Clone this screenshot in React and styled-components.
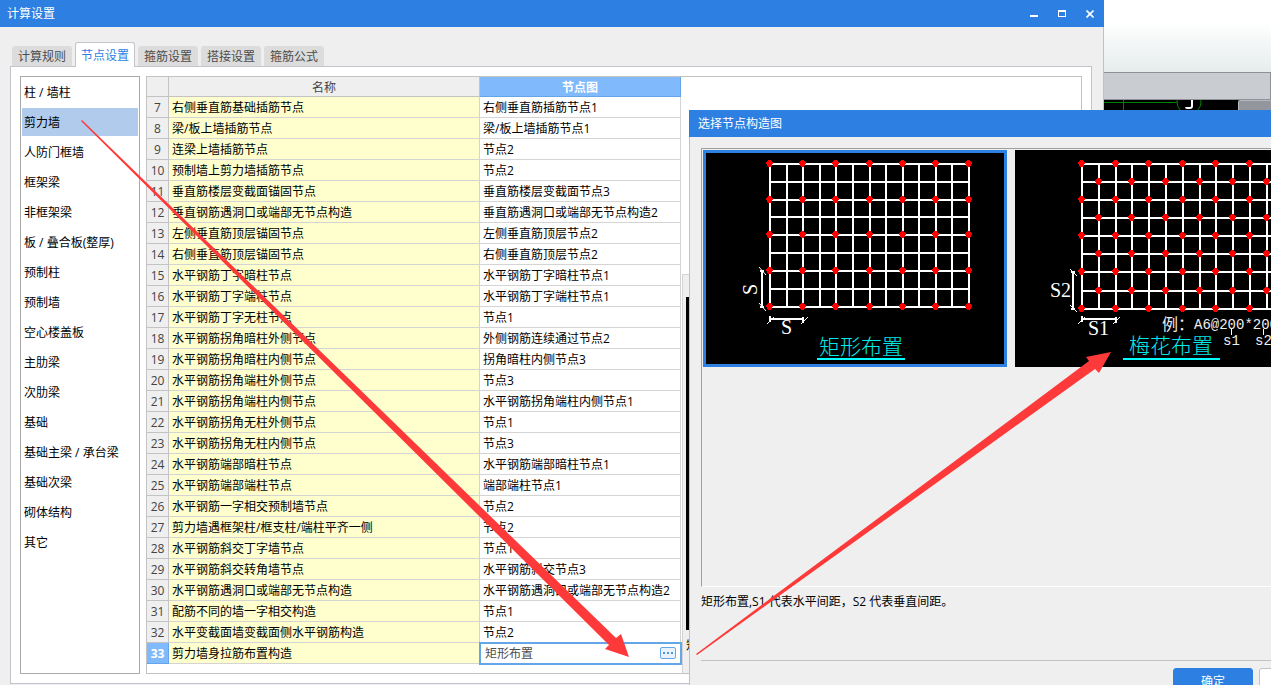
import React, { useState } from "react";
import styled, { createGlobalStyle } from "styled-components";

const tabs = ["计算规则", "节点设置", "箍筋设置", "搭接设置", "箍筋公式"];

const categories = [
  "柱 / 墙柱",
  "剪力墙",
  "人防门框墙",
  "框架梁",
  "非框架梁",
  "板 / 叠合板(整厚)",
  "预制柱",
  "预制墙",
  "空心楼盖板",
  "主肋梁",
  "次肋梁",
  "基础",
  "基础主梁 / 承台梁",
  "基础次梁",
  "砌体结构",
  "其它",
];

// first visible row is number 7
const rows = [
  ["右侧垂直筋基础插筋节点", "右侧垂直筋插筋节点1"],
  ["梁/板上墙插筋节点", "梁/板上墙插筋节点1"],
  ["连梁上墙插筋节点", "节点2"],
  ["预制墙上剪力墙插筋节点", "节点2"],
  ["垂直筋楼层变截面锚固节点", "垂直筋楼层变截面节点3"],
  ["垂直钢筋遇洞口或端部无节点构造", "垂直筋遇洞口或端部无节点构造2"],
  ["左侧垂直筋顶层锚固节点", "左侧垂直筋顶层节点2"],
  ["右侧垂直筋顶层锚固节点", "右侧垂直筋顶层节点2"],
  ["水平钢筋丁字暗柱节点", "水平钢筋丁字暗柱节点1"],
  ["水平钢筋丁字端柱节点", "水平钢筋丁字端柱节点1"],
  ["水平钢筋丁字无柱节点", "节点1"],
  ["水平钢筋拐角暗柱外侧节点", "外侧钢筋连续通过节点2"],
  ["水平钢筋拐角暗柱内侧节点", "拐角暗柱内侧节点3"],
  ["水平钢筋拐角端柱外侧节点", "节点3"],
  ["水平钢筋拐角端柱内侧节点", "水平钢筋拐角端柱内侧节点1"],
  ["水平钢筋拐角无柱外侧节点", "节点1"],
  ["水平钢筋拐角无柱内侧节点", "节点3"],
  ["水平钢筋端部暗柱节点", "水平钢筋端部暗柱节点1"],
  ["水平钢筋端部端柱节点", "端部端柱节点1"],
  ["水平钢筋一字相交预制墙节点", "节点2"],
  ["剪力墙遇框架柱/框支柱/端柱平齐一侧", "节点2"],
  ["水平钢筋斜交丁字墙节点", "节点1"],
  ["水平钢筋斜交转角墙节点", "水平钢筋斜交节点3"],
  ["水平钢筋遇洞口或端部无节点构造", "水平钢筋遇洞口或端部无节点构造2"],
  ["配筋不同的墙一字相交构造", "节点1"],
  ["水平变截面墙变截面侧水平钢筋构造", "节点2"],
];

const rectGrid = {
  xs: [64, 81, 97, 114, 130, 147, 164, 180, 197, 213, 230, 246, 263],
  ys: [11, 29, 47, 64, 82, 100, 118, 136, 154],
};

const plumGrid = {
  xs: [64, 81, 98, 114, 131, 148, 165, 182, 198, 215, 232, 249, 265],
  ys: [11, 29, 47, 65, 83, 101, 119, 138, 156],
};

const Mesh = ({ xs, ys, staggered }) => {
  const right = xs[xs.length - 1];
  const bottom = ys[ys.length - 1];
  const dots = [];
  ys.forEach((y, j) => {
    xs.forEach((x, i) => {
      const even = i % 2 === 0 && j % 2 === 0;
      const odd = i % 2 === 1 && j % 2 === 1;
      if (even || (staggered && odd)) dots.push([x - 1, y - 1]);
    });
  });
  return (
    <g shapeRendering="crispEdges">
      {xs.map((x) => (
        <rect key={x} x={x - 1} y={ys[0] - 1} width="2" height={bottom - ys[0] + 2} fill="#fff" />
      ))}
      {ys.map((y) => (
        <rect key={y} x={xs[0] - 1} y={y - 1} width={right - xs[0] + 2} height="2" fill="#fff" />
      ))}
      {dots.map(([x, y]) => (
        <path
          key={`${x}-${y}`}
          fill="#f00"
          d={`M${x - 2} ${y - 2}h1v-1h3v1h1v1h1v2h-1v2h-1v1h-3v-1h-1v-2h-1v-2h1z`}
        />
      ))}
    </g>
  );
};

const RectDrawing = () => (
  <Drawing viewBox="0 0 298 211" role="img" aria-label="矩形布置">
    <Mesh {...rectGrid} />
    <g fill="none" stroke="#fff">
      <path strokeWidth="2" d="M56 118V154M54 118h4M54 154h4M64 166H97M64 163v6M97 164v6" />
      <path d="M53 114l7 8M53 150l7 8M61 171l7-7M95 171l7-7" />
    </g>
    <CadText x="75" y="181">S</CadText>
    <CadText transform="translate(51 142) rotate(-90)">S</CadText>
    <CadTitle x="113" y="201">矩形布置</CadTitle>
    <path stroke="#0ff" strokeWidth="2" d="M111 206H199" />
  </Drawing>
);

const PlumDrawing = () => (
  <Drawing viewBox="0 0 298 211" role="img" aria-label="梅花布置">
    <Mesh {...plumGrid} staggered />
    <g fill="none" stroke="#fff">
      <path strokeWidth="2" d="M55 119V156M53 119h4M53 156h4M64 166H98M64 163v6M98 164v6" />
      <path d="M52 116l7 7M52 152l7 7M60 171l7-7M95 171l7-7" />
      <path d="M213.500 176v6M245.500 176v6" />
    </g>
    <CadText x="32" y="144">S2</CadText>
    <CadText x="70" y="182">S1</CadText>
    <CadNote x="144" y="177" $size="16px">例：</CadNote>
    <CadNote x="176" y="176">A6@200*200</CadNote>
    <CadNote x="205" y="192">s1</CadNote>
    <CadNote x="237" y="192">s2</CadNote>
    <CadTitle x="111" y="200">梅花布置</CadTitle>
    <path stroke="#0ff" strokeWidth="2" d="M105 206H202" />
  </Drawing>
);

// the CAD application that stays open behind both windows
const Backdrop = () => (
  <Workspace>
    <Ribbon />
    <Toolbar />
    <Canvas>
      <svg width="167" height="60" viewBox="0 0 167 60" aria-hidden="true">
        <g fill="none" stroke="#008000">
          <path d="M0 2.500H73M19.500 0V60" />
          <circle cx="85" cy="2" r="12" />
        </g>
        <path fill="none" stroke="#fff" strokeWidth="2" d="M88 0v6q0 2-2 2h-3q-1 0-1-1" />
        <rect x="134.500" y="0.500" width="34" height="60" rx="1" fill="#93969c" stroke="#b5b8bc" />
      </svg>
    </Canvas>
  </Workspace>
);

const SettingsWindow = () => {
  const [tab, setTab] = useState("节点设置");
  const [category, setCategory] = useState("剪力墙");
  const [value, setValue] = useState("矩形布置");

  return (
    <MainWindow>
      <TitleBar>
        <h1>计算设置</h1>
        <WindowButton aria-label="最小化">
          <svg width="8" height="8" shapeRendering="crispEdges">
            <path fill="#fff" d="M0 5h8v2H0z" />
          </svg>
        </WindowButton>
        <WindowButton aria-label="最大化">
          <svg width="8" height="8" shapeRendering="crispEdges">
            <path fill="#fff" fillRule="evenodd" d="M0 0h8v7H0zM1 2v4h6V2z" />
          </svg>
        </WindowButton>
        <WindowButton aria-label="关闭">
          <svg width="8" height="8">
            <path stroke="#fff" strokeWidth="1.600" d="M0.500 0.500l7 7M7.500 0.500l-7 7" />
          </svg>
        </WindowButton>
      </TitleBar>
      <WindowBody>
        <TabList role="tablist">
          {tabs.map((name) => (
            <Tab
              key={name}
              role="tab"
              aria-selected={name === tab}
              $active={name === tab}
              onClick={() => setTab(name)}
            >
              {name}
            </Tab>
          ))}
        </TabList>
        <TabPanel role="tabpanel">
          <CategoryList>
            {categories.map((name) => (
              <li key={name}>
                <Category $active={name === category} onClick={() => setCategory(name)}>
                  {name}
                </Category>
              </li>
            ))}
          </CategoryList>
          <GridFrame>
            <NodeTable>
              <colgroup>
                <col width="22" />
                <col width="311" />
                <col width="201" />
              </colgroup>
              <thead>
                <tr>
                  <HeadCell />
                  <HeadCell>名称</HeadCell>
                  <HeadCell $active>节点图</HeadCell>
                </tr>
              </thead>
              <tbody>
                {rows.map(([name, node], i) => (
                  <tr key={name}>
                    <NumberCell>{i + 7}</NumberCell>
                    <NameCell>{name}</NameCell>
                    <Cell>{node}</Cell>
                  </tr>
                ))}
                <tr>
                  <NumberCell $active>33</NumberCell>
                  <NameCell>剪力墙身拉筋布置构造</NameCell>
                  <EditCell>
                    <Editor>
                      <input
                        aria-label="剪力墙身拉筋布置构造"
                        value={value}
                        onChange={(e) => setValue(e.target.value)}
                      />
                      <MoreButton aria-label="选择节点构造图">
                        <svg width="10" height="2" shapeRendering="crispEdges">
                          <path fill="#4a98e0" d="M0 0h2v2H0zM4 0h2v2H4zM8 0h2v2H8z" />
                        </svg>
                      </MoreButton>
                    </Editor>
                  </EditCell>
                </tr>
              </tbody>
            </NodeTable>
            <PreviewPane>
              <PreviewCanvas />
              <p>矩形布置</p>
            </PreviewPane>
          </GridFrame>
        </TabPanel>
      </WindowBody>
    </MainWindow>
  );
};

const NodeDialog = () => {
  const [picked, setPicked] = useState("rect");
  return (
    <DialogWindow role="dialog" aria-label="选择节点构造图">
      <TitleBar>
        <h2>选择节点构造图</h2>
      </TitleBar>
      <DialogBody>
        <CardList>
          <Card $active={picked === "rect"} onClick={() => setPicked("rect")}>
            <RectDrawing />
          </Card>
          <Card $active={picked === "plum"} onClick={() => setPicked("plum")}>
            <PlumDrawing />
          </Card>
        </CardList>
        <Hint>矩形布置,S1 代表水平间距，S2 代表垂直间距。</Hint>
        <Footer>
          <DialogButton $primary>确定</DialogButton>
          <DialogButton>取消</DialogButton>
        </Footer>
      </DialogBody>
    </DialogWindow>
  );
};

const App = () => {
  return (
    <Desktop>
      <GlobalStyle />
      <Backdrop />
      <SettingsWindow />
      <NodeDialog />
      <Arrows aria-hidden="true">
        <path d="M81 121L82 120L616 638L621 634L629 657L605 649L609 645Z" />
        <path d="M696 654L1089 361L1086 357L1111 352L1099 373L1095 369L697 655Z" />
      </Arrows>
    </Desktop>
  );
};

const GlobalStyle = createGlobalStyle`
  * {
    margin: 0;
    padding: 0;
    box-sizing: border-box;
  }
  body {
    font-family: "Open Sans", "Noto Sans CJK SC", sans-serif;
    font-size: 12px;
    line-height: 20px;
    color: #000;
  }
  button, input {
    font: inherit;
    color: inherit;
    border: none;
    background: none;
  }
`;

const Desktop = styled.div`
  position: relative;
  height: 100vh;
  overflow: hidden;
`;

const Workspace = styled.div`
  display: flex;
  flex-direction: column;
  height: 100%;
`;

const Ribbon = styled.div`
  height: 72px;
  background: linear-gradient(#fff 30%, #e6ecec);
`;

const Toolbar = styled.div`
  height: 28px;
  background: #c9ccd1;
  border: 1px solid #8e9196;
  border-left: none;
`;

const Canvas = styled.div`
  display: flex;
  justify-content: flex-end;
  flex: 1;
  background: #000;
`;

const MainWindow = styled.section`
  position: absolute;
  top: 0;
  left: 0;
  right: 167px;
  min-height: 100%;
  background: #efefef;
`;

const TitleBar = styled.header`
  display: flex;
  align-items: center;
  height: 27px;
  padding-left: 7px;
  background: #2d7fe2;
  color: #fff;
  h1,
  h2 {
    flex: 1;
    font-size: 12px;
    font-weight: normal;
  }
`;

const WindowButton = styled.button`
  display: flex;
  align-items: center;
  justify-content: center;
  width: 28px;
  height: 27px;
`;

const WindowBody = styled.div`
  padding: 15px 11px 1px 10px;
  border-right: 1px solid #b9c3cf;
`;

const TabList = styled.div`
  display: flex;
  align-items: flex-end;
  gap: 3px;
  height: 25px;
  padding-left: 2px;
  margin-bottom: -1px;
`;

const Tab = styled.button`
  position: relative;
  width: 60px;
  height: ${({ $active }) => ($active ? "25px" : "20px")};
  padding-top: 2px;
  line-height: 18px;
  margin-bottom: ${({ $active }) => ($active ? "0" : "1px")};
  border: ${({ $active }) => ($active ? "1px solid #c3c4cb" : "none")};
  border-bottom: none;
  border-radius: 3px 3px 0 0;
  background: ${({ $active }) => ($active ? "#fff" : "#dcdcdc")};
  color: ${({ $active }) => ($active ? "#2d7fe2" : "#4c4c4c")};
`;

const TabPanel = styled.div`
  display: flex;
  gap: 6px;
  padding: 9px;
  border: 1px solid #c3c4cb;
  background: #fff;
`;

const CategoryList = styled.ul`
  display: flex;
  flex-direction: column;
  gap: 2px;
  width: 120px;
  padding: 1px;
  border: 1px solid #aaa;
  list-style: none;
`;

const Category = styled.button`
  display: block;
  width: 100%;
  height: 28px;
  padding: 2px 0 0 2px;
  text-align: left;
  white-space: nowrap;
  background: ${({ $active }) => ($active ? "#b1cbec" : "transparent")};
`;

const GridFrame = styled.div`
  display: flex;
  flex: 1;
  gap: 1px;
  border: 1px solid #c3c3c3;
`;

const NodeTable = styled.table`
  width: 534px;
  margin-bottom: 9px;
  table-layout: fixed;
  border-collapse: separate;
  border-spacing: 0;
`;

const Cell = styled.td`
  height: 21px;
  padding: 2px 0 0 3px;
  line-height: 18px;
  border-right: 1px solid #d4d4d4;
  border-bottom: 1px solid #d4d4d4;
  white-space: nowrap;
`;

const NameCell = styled(Cell)`
  background: #ffffcd;
`;

const NumberCell = styled(Cell)`
  padding-left: 0;
  text-align: center;
  background: ${({ $active }) => ($active ? "#80bafc" : "#efefef")};
  border-color: ${({ $active }) => ($active ? "#64a5e8" : "#c3c3c3")};
  color: ${({ $active }) => ($active ? "#fff" : "#444")};
  font-weight: ${({ $active }) => ($active ? "bold" : "normal")};
`;

const HeadCell = styled.th`
  height: 20px;
  padding-top: 2px;
  line-height: 17px;
  border-right: 1px solid ${({ $active }) => ($active ? "#64a5e8" : "#c3c3c3")};
  border-bottom: 1px solid ${({ $active }) => ($active ? "#64a5e8" : "#c3c3c3")};
  background: ${({ $active }) => ($active ? "#80bafc" : "#efefef")};
  color: ${({ $active }) => ($active ? "#fff" : "#444")};
  font-weight: ${({ $active }) => ($active ? "bold" : "normal")};
`;

const EditCell = styled(Cell)`
  padding: 0;
  outline: 2px solid #64a7e8;
  outline-offset: -1px;
`;

const Editor = styled.div`
  display: flex;
  align-items: center;
  height: 20px;
  padding: 0 4px 0 5px;
  color: #4c4c4c;
  input {
    flex: 1;
    min-width: 0;
    height: 18px;
    padding-top: 1px;
    outline: none;
  }
`;

const MoreButton = styled.button`
  display: flex;
  align-items: center;
  justify-content: center;
  width: 16px;
  height: 12px;
  border: 1px solid #64a7e8;
  border-radius: 2px;
  background: #eaf3fc;
`;

const PreviewPane = styled.div`
  flex: 1;
  margin-top: auto;
  padding: 22px 3px 0;
  border-top: 1px solid #d4d4d4;
  border-left: 1px solid #d4d4d4;
  background: #efefef;
  p {
    padding: 6px 0 17px;
  }
`;

const PreviewCanvas = styled.div`
  height: 333px;
  background: #000;
`;

const DialogWindow = styled.section`
  position: absolute;
  top: 110px;
  left: 689px;
  right: -80px;
  min-height: 590px;
  background: #efefef;
  ${TitleBar} {
    padding-left: 9px;
  }
`;

const DialogBody = styled.div`
  padding: 11px 12px 11px 11px;
  border-left: 1px solid #b9c3cf;
`;

const CardList = styled.div`
  display: flex;
  align-items: flex-start;
  gap: 8px;
  height: 439px;
  padding: 1px;
  border: 1px solid #a0a0a0;
  border-bottom-color: #fff;
  overflow: hidden;
`;

const Card = styled.button`
  flex: none;
  width: 304px;
  height: 217px;
  border: 3px solid ${({ $active }) => ($active ? "#2d7fe2" : "#000")};
  background: #000;
`;

const Drawing = styled.svg`
  display: block;
  width: 298px;
  height: 211px;
`;

const CadText = styled.text`
  fill: #fff;
  font-family: "Liberation Serif", serif;
  font-size: 20px;
`;

const CadNote = styled.text`
  fill: #eee;
  font-family: "Liberation Mono", "Noto Sans CJK SC", monospace;
  font-size: ${({ $size }) => $size || "14px"};
`;

const CadTitle = styled.text`
  fill: #00ecec;
  font-family: "Noto Sans CJK SC", sans-serif;
  font-size: 21px;
  font-weight: 300;
`;

const Hint = styled.p`
  padding: 5px 0 48px;
`;

const Footer = styled.footer`
  display: flex;
  justify-content: flex-end;
  gap: 6px;
  padding-top: 7px;
  border-top: 1px solid #c3c3c3;
`;

const DialogButton = styled.button`
  width: 80px;
  height: 26px;
  padding-top: 1px;
  border: 1px solid ${({ $primary }) => ($primary ? "#2d7fe2" : "#c3c3c3")};
  border-radius: 3px;
  background: ${({ $primary }) => ($primary ? "#2d7fe2" : "#fff")};
  color: ${({ $primary }) => ($primary ? "#fff" : "#444")};
`;

const Arrows = styled.svg`
  position: absolute;
  top: 0;
  left: 0;
  width: 100%;
  height: 100%;
  fill: #fd3a39;
  pointer-events: none;
`;

export default App;
